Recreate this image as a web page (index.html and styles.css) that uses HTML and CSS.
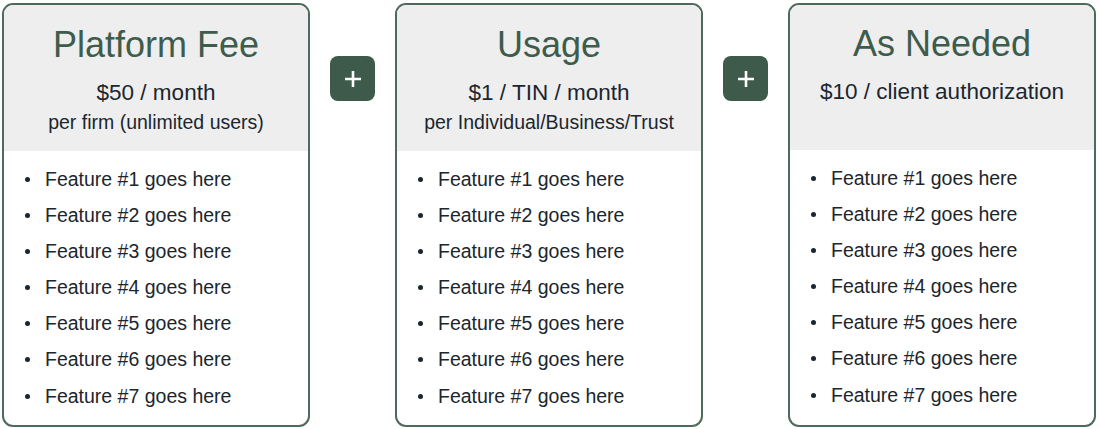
FILE: index.html
```html
<!DOCTYPE html>
<html>
<head>
<meta charset="utf-8">
<link rel="stylesheet" href="styles.css">
</head>
<body>
<div class="plans">
  <div class="card">
    <div class="head">
      <div class="title">Platform Fee</div>
      <div class="price">$50 / month</div>
      <div class="sub">per firm (unlimited users)</div>
    </div>
    <ul class="features">
      <li>Feature #1 goes here</li>
      <li>Feature #2 goes here</li>
      <li>Feature #3 goes here</li>
      <li>Feature #4 goes here</li>
      <li>Feature #5 goes here</li>
      <li>Feature #6 goes here</li>
      <li>Feature #7 goes here</li>
    </ul>
  </div>
  <div class="plus"><svg width="20" height="20" viewBox="0 0 20 20"><path d="M10 2v16M2 10h16" stroke="#fff" stroke-width="2.6" fill="none"/></svg></div>
  <div class="card">
    <div class="head">
      <div class="title">Usage</div>
      <div class="price">$1 / TIN / month</div>
      <div class="sub">per Individual/Business/Trust</div>
    </div>
    <ul class="features">
      <li>Feature #1 goes here</li>
      <li>Feature #2 goes here</li>
      <li>Feature #3 goes here</li>
      <li>Feature #4 goes here</li>
      <li>Feature #5 goes here</li>
      <li>Feature #6 goes here</li>
      <li>Feature #7 goes here</li>
    </ul>
  </div>
  <div class="plus"><svg width="20" height="20" viewBox="0 0 20 20"><path d="M10 2v16M2 10h16" stroke="#fff" stroke-width="2.6" fill="none"/></svg></div>
  <div class="card card-alt">
    <div class="head">
      <div class="title">As Needed</div>
      <div class="price">$10 / client authorization</div>
    </div>
    <ul class="features">
      <li>Feature #1 goes here</li>
      <li>Feature #2 goes here</li>
      <li>Feature #3 goes here</li>
      <li>Feature #4 goes here</li>
      <li>Feature #5 goes here</li>
      <li>Feature #6 goes here</li>
      <li>Feature #7 goes here</li>
    </ul>
  </div>
</div>
</body>
</html>
```

FILE: styles.css
```css
html, body {
  margin: 0;
  padding: 0;
  background: #ffffff;
}
body {
  font-family: "Liberation Sans", Arial, Helvetica, sans-serif;
  color: #1b262e;
}
.plans {
  display: flex;
  align-items: flex-start;
  gap: 20px;
  padding: 3px 0 0 2px;
}
.card {
  box-sizing: border-box;
  width: 308px;
  height: 424px;
  border: 2px solid #4e6a5a;
  border-radius: 11px;
  overflow: hidden;
  background: #fff;
  display: flex;
  flex-direction: column;
}
.head {
  box-sizing: border-box;
  height: 146px;
  background: #eeeeee;
  text-align: center;
  padding-top: 19px;
}
.title {
  font-size: 36px;
  line-height: 42px;
  color: #3d5c4b;
}
.price {
  font-size: 22.5px;
  line-height: 28px;
  margin-top: 13px;
}
.sub {
  font-size: 19.5px;
  line-height: 26px;
  margin-top: 2px;
}
.card-alt .head {
  height: 145px;
  padding-top: 18px;
}
.features {
  list-style: none;
  margin: 0;
  padding: 10px 0 0 41px;
}
.features li {
  position: relative;
  font-size: 19.5px;
  line-height: 36.1px;
}
.features li::before {
  content: "";
  position: absolute;
  left: -20px;
  top: 16px;
  width: 5px;
  height: 5px;
  border-radius: 50%;
  background: #1b262e;
}
.plus {
  flex: none;
  width: 45px;
  height: 45px;
  margin-top: 53px;
  border-radius: 8px;
  background: #3d5a4b;
  display: flex;
  align-items: center;
  justify-content: center;
}
```
